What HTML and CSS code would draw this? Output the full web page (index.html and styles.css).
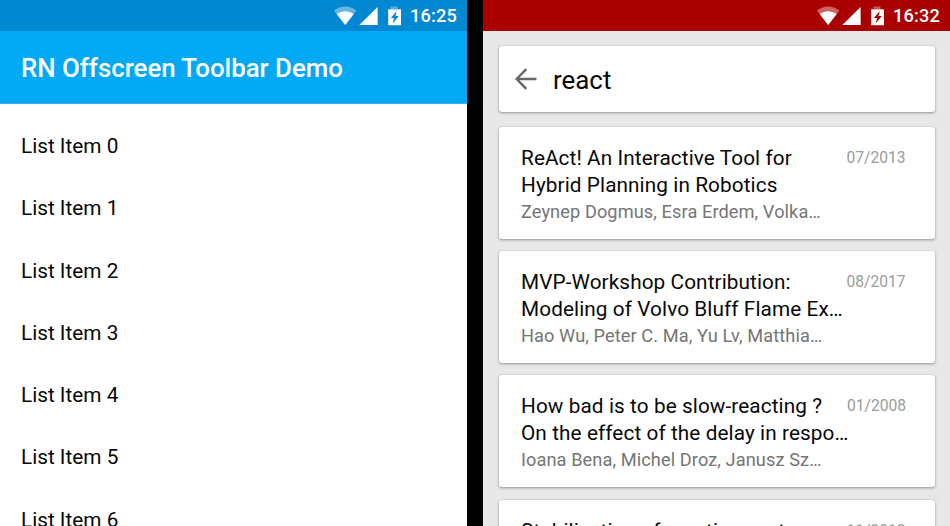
FILE: index.html
```html
<!DOCTYPE html>
<html lang="en">
<head>
<meta charset="utf-8">
<title>Offscreen Toolbar</title>
<link rel="stylesheet" href="styles.css">
</head>
<body>
<svg width="0" height="0" class="defs">
  <symbol id="status" viewBox="0 0 70 22">
    <path d="M0 4.6Q11.2-3.6 22.4 4.6L11.2 19Z" opacity=".4"/>
    <path d="M2.7 8.1Q11.2 2.6 19.7 8.1L11.2 19Z"/>
    <path d="M43.6 1V19H25.3Z"/>
    <path d="M56.5 .5H63.5V3H67V6H54.2V3H56.5Z" opacity=".35"/>
    <path fill-rule="evenodd" d="M54.2 3.6H67V19.3H54.2ZM62.8 5.1L56.8 12H60.1L58.7 17.4L64.8 9.9H61.5Z"/>
  </symbol>
</svg>
<main class="screens">
  <section class="phone demo">
    <header class="statusbar"><svg class="status-icons"><use href="#status"/></svg><span class="clock">16:25</span></header>
    <h1 class="toolbar">RN Offscreen Toolbar Demo</h1>
    <ul class="list">
      <li>List Item 0</li><li>List Item 1</li><li>List Item 2</li><li>List Item 3</li><li>List Item 4</li><li>List Item 5</li><li>List Item 6</li>
    </ul>
  </section>
  <section class="phone search">
    <header class="statusbar"><svg class="status-icons"><use href="#status"/></svg><span class="clock">16:32</span></header>
    <div class="results">
      <div class="searchbox">
        <svg class="back" viewBox="0 0 22 22"><path d="M11.3 1.2L1.6 11L11.3 20.8M1.6 11H21.5"/></svg>
        <span>react</span>
      </div>
      <article class="card">
        <div class="info"><h2>ReAct! An Interactive Tool for<br>Hybrid Planning in Robotics</h2><p>Zeynep Dogmus, Esra Erdem, Volka…</p></div>
        <time>07/2013</time>
      </article>
      <article class="card">
        <div class="info"><h2>MVP-Workshop Contribution:<br>Modeling of Volvo Bluff Flame Ex…</h2><p>Hao Wu, Peter C. Ma, Yu Lv, Matthia…</p></div>
        <time>08/2017</time>
      </article>
      <article class="card">
        <div class="info"><h2>How bad is to be slow-reacting ?<br>On the effect of the delay in respo…</h2><p>Ioana Bena, Michel Droz, Janusz Sz…</p></div>
        <time>01/2008</time>
      </article>
      <article class="card">
        <div class="info"><h2>Stabilization of reaction systems</h2></div>
        <time>11/2012</time>
      </article>
    </div>
  </section>
</main>
</body>
</html>
```

FILE: styles.css
```css
* { box-sizing: border-box; }
body, h1, h2, p, ul { margin: 0; padding: 0; }
body { font-family: Roboto, sans-serif; background: #000; color: #080808; overflow: hidden; }
.defs { display: block; }
.screens { display: flex; gap: 16px; width: 950px; height: 526px; overflow: hidden; }
.phone { width: 467px; flex: none; overflow: hidden; }
.demo { background: #fff; }
.search { background: #e8e8e8; }
.statusbar { height: 31px; display: flex; align-items: center; justify-content: flex-end; padding: 1px 10px 0 0; color: #fff; }
.demo .statusbar { background: #0288d1; }
.search .statusbar { background: #a90000; }
.status-icons { width: 70px; height: 22px; fill: #fff; margin: 1px 6px 0 0; }
.clock { font-size: 18.2px; font-weight: 500; letter-spacing: .15px; line-height: 30px; width: 47px; white-space: nowrap; }
.toolbar { height: 73px; padding: 1px 21px 0; line-height: 72px; font-size: 25.8px; font-weight: 500; color: #fff; background: #03a9f4; border-bottom: 1px solid #2fb0f1; white-space: nowrap; }
.list { list-style: none; padding-top: 11px; }
.list li { height: 62.25px; line-height: 62.25px; padding-left: 21px; font-size: 20.75px; }
.results { padding: 15.2px 15.5px 0; }
.searchbox, .card { background: #fff; border-radius: 3px; box-shadow: 0 1px 3px rgba(0,0,0,.36), 0 0 1px rgba(0,0,0,.2); }
.searchbox { height: 66px; display: flex; align-items: center; padding-left: 16.5px; margin-bottom: 14.8px; font-size: 25.9px; }
.back { width: 22px; height: 22px; margin-right: 16px; fill: none; stroke: #666; stroke-width: 2.4; }
.searchbox span { padding-top: 1px; }
.card { height: 111.7px; margin-bottom: 12.5px; padding: 18px 29px 0 22.5px; display: flex; justify-content: space-between; }
.info { width: 326px; white-space: nowrap; letter-spacing: .09px; }
.card h2 { font-size: 20.75px; line-height: 27px; font-weight: 400; }
.card p { font-size: 18.2px; line-height: 26px; color: #757575; }
.card time { font-size: 15.6px; line-height: 27px; color: #9b9b9b; }
```
